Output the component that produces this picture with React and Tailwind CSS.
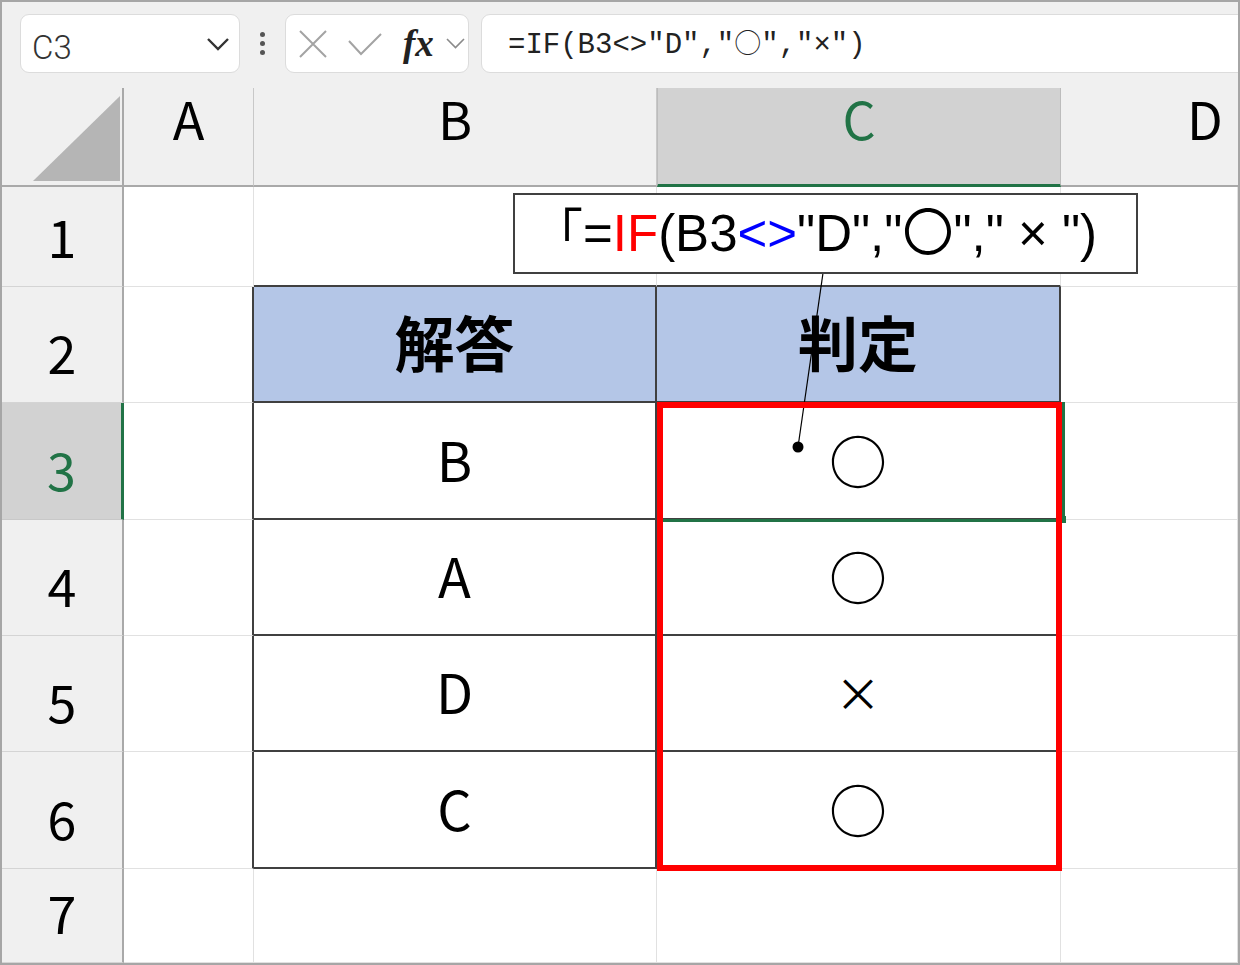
import React from "react";

const JP = "font-['Noto_Sans_CJK_JP',sans-serif]";

function RowHead({ n, active }) {
  if (active) {
    return (
      <div className="flex items-end justify-center bg-[#d2d2d2] border-r-[3px] border-r-[#217346] border-b border-b-[#c8c8c8] pb-[24px] text-[52px] leading-none text-[#217346]">
        {n}
      </div>
    );
  }
  return (
    <div className="flex items-end justify-center bg-[#f0f0f0] border-r-2 border-r-[#a9a9a9] border-b border-b-[#d4d4d4] pb-[24px] text-[52px] leading-none text-black">
      {n}
    </div>
  );
}

function Plain() {
  return <div className="bg-white border-r border-b border-[#e1e1e1]" />;
}

function LeftOfTable() {
  return <div className="bg-white border-r-2 border-r-[#404040] border-b border-b-[#e1e1e1]" />;
}

function TableCell({ children }) {
  return (
    <div className="bg-white flex items-center justify-center border-r-2 border-b-2 border-[#404040] pb-[4px] text-[54px] leading-none text-black">
      {children}
    </div>
  );
}

function Mark({ children, small }) {
  return (
    <div
      className={
        small
          ? "bg-white flex items-center justify-center border-r-2 border-b-2 border-[#404040] pb-[4px] text-[46px] leading-none text-black"
          : "bg-white flex items-center justify-center border-r-2 border-b-2 border-[#404040] pb-[4px] text-[58px] leading-none text-black"
      }
    >
      {children}
    </div>
  );
}

export default function App() {
  return (
    <div className={`w-[1240px] h-[965px] relative overflow-hidden border-2 border-[#a6a6a6] bg-white flex flex-col ${JP}`}>
      {/* formula bar */}
      <div className="h-[86px] shrink-0 bg-[#f0f0f0] flex items-start pt-[12px] overflow-hidden">
        <div className="ml-[18px] w-[220px] h-[59px] shrink-0 bg-white rounded-[9px] border border-[#dcdcdc] flex items-center justify-between pl-[11px] pr-[9px]">
          <span className="mt-[7px] font-['Roboto',sans-serif] font-light text-[33px] leading-none text-[#333]">C3</span>
          <svg width="24" height="14" viewBox="0 0 24 14">
            <path d="M2 2 L12 12 L22 2" stroke="#333" strokeWidth="2.4" fill="none" />
          </svg>
        </div>
        <div className="w-[45px] h-[59px] shrink-0 flex flex-col items-center justify-center gap-[4px]">
          <span className="w-[5px] h-[5px] rounded-full bg-[#555]" />
          <span className="w-[5px] h-[5px] rounded-full bg-[#555]" />
          <span className="w-[5px] h-[5px] rounded-full bg-[#555]" />
        </div>
        <div className="w-[184px] h-[59px] shrink-0 bg-white rounded-[9px] border border-[#dcdcdc] flex items-center">
          <svg className="ml-[12px]" width="30" height="30" viewBox="0 0 30 30">
            <path d="M2 2L28 28M28 2L2 28" stroke="#a3a3a3" strokeWidth="2" />
          </svg>
          <svg className="ml-[19px]" width="36" height="24" viewBox="0 0 36 24">
            <path d="M2 9 L14 22 L34 2" stroke="#a3a3a3" strokeWidth="2" fill="none" />
          </svg>
          <span className="ml-[20px] font-['Liberation_Serif',serif] italic font-bold text-[37px] leading-none text-[#222]">fx</span>
          <svg className="ml-[12px]" width="19" height="11" viewBox="0 0 19 11">
            <path d="M1 1L9.5 9.5L18 1" stroke="#8a8a8a" strokeWidth="1.6" fill="none" />
          </svg>
        </div>
        <div className="ml-[12px] w-[800px] h-[59px] shrink-0 bg-white rounded-[9px] border border-[#dcdcdc] flex items-center pl-[26px]">
          <span className="font-['Liberation_Mono','DejaVu_Sans_Mono',monospace] text-[29px] leading-none text-[#222] whitespace-nowrap">
            =IF(B3&lt;&gt;"D","<span className="font-['Noto_Sans_CJK_JP',sans-serif] text-[27px] font-light">○</span>","×")
          </span>
        </div>
      </div>

      {/* grid */}
      <div className="flex-1 grid grid-cols-[122px_130px_403px_404px_1fr] grid-rows-[99px_100px_116px_117px_116px_116px_117px_1fr]">
        {/* header row */}
        <div className="bg-[#f0f0f0] border-r-2 border-r-[#a9a9a9] border-b-2 border-b-[#a9a9a9]">
          <svg width="120" height="97" viewBox="0 0 120 97">
            <polygon points="31,93 118,8 118,93" fill="#b5b5b5" />
          </svg>
        </div>
        <div className="bg-[#f0f0f0] border-r border-r-[#c8c8c8] border-b-2 border-b-[#a9a9a9] flex justify-center items-start pt-[4px] text-[52px] leading-none text-black">A</div>
        <div className="bg-[#f0f0f0] border-r border-r-[#c8c8c8] border-b-2 border-b-[#a9a9a9] flex justify-center items-start pt-[4px] text-[52px] leading-none text-black">B</div>
        <div className="bg-[#d2d2d2] border-l border-l-[#bcbcbc] border-r border-r-[#bcbcbc] border-b-[3px] border-b-[#217346] flex justify-center items-start pt-[4px] text-[52px] leading-none text-[#217346]">C</div>
        <div className="bg-[#f0f0f0] border-b-2 border-b-[#a9a9a9] flex justify-start items-start pl-[126px] pt-[4px] text-[52px] leading-none text-black">D</div>

        {/* row 1 */}
        <RowHead n="1" />
        <div className="bg-white border-r border-r-[#e1e1e1] border-b border-b-[#e1e1e1]" />
        <div className="bg-white border-r border-r-[#e1e1e1] border-b-2 border-b-[#404040]" />
        <div className="bg-white border-r border-r-[#e1e1e1] border-b-2 border-b-[#404040]" />
        <Plain />

        {/* row 2 */}
        <RowHead n="2" />
        <LeftOfTable />
        <div className="bg-[#b4c6e7] flex items-center justify-center border-r-2 border-b-2 border-[#404040] pb-[6px] text-[60px] font-bold leading-none text-black">解答</div>
        <div className="bg-[#b4c6e7] flex items-center justify-center border-r-2 border-b-2 border-[#404040] pb-[6px] text-[60px] font-bold leading-none text-black">判定</div>
        <Plain />

        {/* row 3 */}
        <RowHead n="3" active />
        <LeftOfTable />
        <TableCell>B</TableCell>
        <Mark>○</Mark>
        <Plain />

        {/* row 4 */}
        <RowHead n="4" />
        <LeftOfTable />
        <TableCell>A</TableCell>
        <Mark>○</Mark>
        <Plain />

        {/* row 5 */}
        <RowHead n="5" />
        <LeftOfTable />
        <TableCell>D</TableCell>
        <Mark small>×</Mark>
        <Plain />

        {/* row 6 */}
        <RowHead n="6" />
        <LeftOfTable />
        <TableCell>C</TableCell>
        <Mark>○</Mark>
        <Plain />

        {/* row 7 */}
        <RowHead n="7" />
        <Plain />
        <Plain />
        <Plain />
        <Plain />
      </div>

      {/* active cell outline */}
      <div className="absolute left-[655px] top-[400px] w-[408px] h-[120px] border-[3px] border-[#217346]" />
      <div className="absolute left-[1057px] top-[514px] w-[7px] h-[7px] bg-[#217346]" />

      {/* pointer line */}
      <svg className="absolute left-0 top-0 pointer-events-none" width="1236" height="961" viewBox="0 0 1236 961">
        <line x1="821" y1="271" x2="796" y2="445" stroke="#000" strokeWidth="1.2" />
        <circle cx="796" cy="445" r="5.5" fill="#000" />
      </svg>

      {/* red highlight */}
      <div className="absolute left-[655px] top-[400px] w-[405px] h-[469px] border-[6px] border-[#ff0000]" />

      {/* callout */}
      <div className="absolute left-[511px] top-[191px] w-[625px] h-[81px] bg-white border-2 border-[#404040] flex items-center justify-center pr-[22px]">
        <span className="font-['Liberation_Sans','Noto_Sans_CJK_JP',sans-serif] text-[51px] leading-none text-black whitespace-nowrap">
          「=<span className="text-[#ff0000]">IF</span>(B3<span className="text-[#0000ff]">&lt;&gt;</span>"D","〇"," × ")
        </span>
      </div>
    </div>
  );
}
